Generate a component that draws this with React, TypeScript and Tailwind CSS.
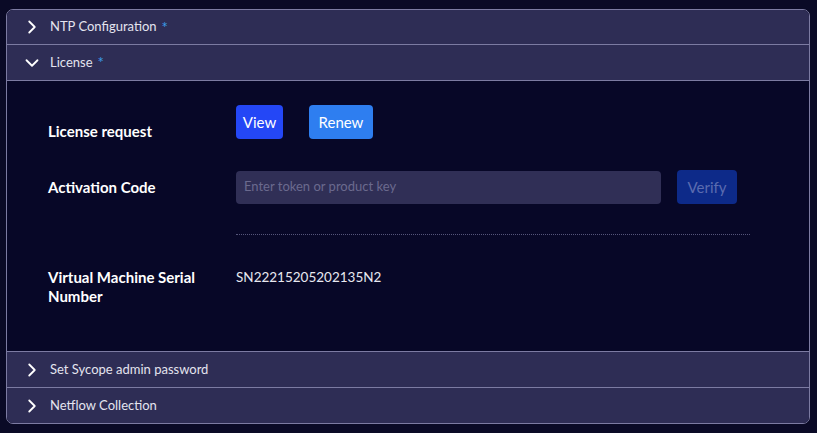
import { ChevronDown, ChevronRight } from 'lucide-react';

const font = { fontFamily: 'Lato, "Noto Sans", sans-serif' };

function Header({ title, open, required, first }: { title: string; open?: boolean; required?: boolean; first?: boolean }) {
  return (
    <div
      className={`flex ${first ? 'h-[34px]' : 'h-[35px]'} items-center bg-[#2e2d55] pl-[14px] text-[13px] text-[#e4e4ef]`}
    >
      {open ? (
        <ChevronDown className="size-[22px] text-white" strokeWidth={2} />
      ) : (
        <ChevronRight className="size-[22px] text-white" strokeWidth={2} />
      )}
      <span className="ml-[7px]">{title}</span>
      {required && <span className="ml-[5px] text-[15px] leading-none text-[#3b9de8]">*</span>}
    </div>
  );
}

export default function App() {
  return (
    <div className="h-[433px] w-[817px] bg-[#0a0a26] pl-[6px] pt-[9px]" style={font}>
      <div className="w-[804px] overflow-hidden rounded-[7px] border border-[#7c7ba2]">
        <Header title="NTP Configuration" required first />
        <div className="border-t border-[#7c7ba2]">
          <Header title="License" open required />
        </div>
        <div className="h-[271px] border-t border-[#7c7ba2] bg-[#070727] pl-[41px] pt-[24px] text-white">
          <div className="grid grid-cols-[188px_1fr]">
            <div className="h-[34px] pt-[16px] text-[15px] font-bold leading-[20px]">License request</div>
            <div className="flex">
              <button className="h-[34px] w-[47px] rounded-[4px] bg-[#2447f6] text-[15px]">View</button>
              <button className="ml-[26px] h-[34px] w-[64px] rounded-[4px] bg-[#2e7ef0] text-[15px]">Renew</button>
            </div>
          </div>
          <div className="mt-[31px] grid grid-cols-[188px_1fr] items-center">
            <div className="text-[15px] font-bold">Activation Code</div>
            <div className="flex items-center gap-[16px]">
              <div className="flex h-[33px] w-[425px] items-center rounded-[4px] bg-[#302f56] px-[8px] text-[13px] text-[#6b6a8e]">
                Enter token or product key
              </div>
              <button className="h-[34px] w-[60px] rounded-[4px] bg-[#0d2a89] text-[15px] text-[#5b6cb0]">Verify</button>
            </div>
          </div>
          <div className="ml-[188px] mt-[30px] w-[514px] border-t border-dotted border-[#55557a]" />
          <div className="mt-[33px] grid grid-cols-[188px_1fr]">
            <div className="text-[15px] font-bold leading-[19px]">
              Virtual Machine Serial
              <br />
              Number
            </div>
            <div className="text-[13.5px] leading-[19px] text-[#e8e8f0]">SN22215205202135N2</div>
          </div>
        </div>
        <div className="border-t border-[#7c7ba2]">
          <Header title="Set Sycope admin password" />
        </div>
        <div className="border-t border-[#7c7ba2]">
          <Header title="Netflow Collection" />
        </div>
      </div>
    </div>
  );
}
